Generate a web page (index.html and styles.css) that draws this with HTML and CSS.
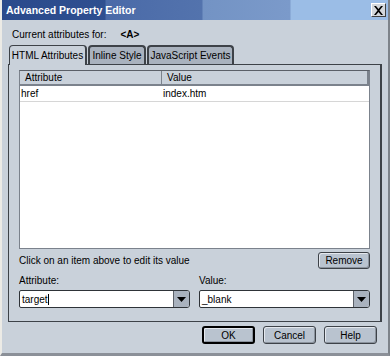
FILE: index.html
```html
<!DOCTYPE html>
<html>
<head>
<meta charset="utf-8">
<link rel="stylesheet" href="styles.css">
</head>
<body>
<div class="window">
  <div class="titlebar">
    <span class="title">Advanced Property Editor</span>
    <span class="close"><svg width="11" height="9" viewBox="0 0 11 9"><path d="M1 0h2l2.5 3L8 0h2L6.5 4.5 10 9H8L5.5 6 3 9H1l3.5-4.5z" fill="#000"/></svg></span>
  </div>
  <div class="content">
    <div class="current"><span>Current attributes for:</span><span class="tag">&lt;A&gt;</span></div>
    <div class="tabs">
      <div class="tab active t1">HTML Attributes</div>
      <div class="tab t2">Inline Style</div>
      <div class="tab t3">JavaScript Events</div>
    </div>
    <div class="panel">
      <div class="list">
        <div class="list-head">
          <div class="col c1">Attribute</div>
          <div class="col c2">Value</div>
        </div>
        <div class="list-row">
          <div class="cell c1">href</div>
          <div class="cell c2">index.htm</div>
        </div>
      </div>
      <div class="hint-row">
        <span>Click on an item above to edit its value</span>
        <button class="btn small">Remove</button>
      </div>
      <div class="fields">
        <div class="field">
          <label>Attribute:</label>
          <div class="combo"><span class="val">target<span class="caret"></span></span><span class="arrow"><svg width="9" height="5" viewBox="0 0 9 5"><path d="M0 0h9L4.5 5z" fill="#000"/></svg></span></div>
        </div>
        <div class="field">
          <label>Value:</label>
          <div class="combo"><span class="val">_blank</span><span class="arrow"><svg width="9" height="5" viewBox="0 0 9 5"><path d="M0 0h9L4.5 5z" fill="#000"/></svg></span></div>
        </div>
      </div>
    </div>
    <div class="buttons">
      <button class="btn default">OK</button>
      <button class="btn">Cancel</button>
      <button class="btn">Help</button>
    </div>
  </div>
</div>
</body>
</html>
```
FILE: styles.css
```css
* { box-sizing: border-box; }
html, body { margin: 0; padding: 0; }
body { width: 390px; height: 356px; overflow: hidden; font-family: "Liberation Sans", Arial, sans-serif; font-size: 10px; color: #000; background: #c9d1da; }
.window { width: 390px; height: 356px; display: flex; flex-direction: column; background: #c9d1da; border-left: 2px solid #ecebe6; border-right: 2px solid #7d838a; border-bottom: 3px solid #8b9098; }
.titlebar { height: 20px; flex: none; display: flex; align-items: center; justify-content: space-between; padding: 0 2px 0 4px; background: linear-gradient(90deg, #2a4a8c 0, #2f4f90 103px, #4a6aa8 104px, #5373ad 200px, #7393c4 201px, #7b9aca 288px, #9bbde6 289px, #9bbde6 100%); }
.title { color: #fff; font-weight: bold; font-size: 10.5px; }
.close { width: 15px; height: 14px; background: #d4d8dc; border: 1px solid; border-color: #fff #404040 #404040 #fff; display: flex; align-items: center; justify-content: center; }
.content { flex: 1; display: flex; flex-direction: column; padding: 0 6px 0 6px; }
.current { height: 24px; padding-top: 4px; display: flex; align-items: center; gap: 14px; padding-left: 4px; }
.tag { font-weight: bold; }
.tabs { display: flex; height: 20px; align-items: flex-end; gap: 1px; padding-left: 1px; }
.tab { height: 19px; padding: 0; white-space: nowrap; display: flex; align-items: center; justify-content: center; background: #a9b2be; border: 2px solid #3d4248; border-bottom: none; border-radius: 4px 4px 0 0; }
.t1 { width: 78px; }
.t2 { width: 58px; }
.t3 { width: 87px; }
.tab.active { background: #c9d1da; height: 20px; margin-bottom: -1px; position: relative; z-index: 1; border-width: 1px; border-right-width: 2px; }
.panel { height: 258px; border: 1px solid #3d4248; border-right-width: 2px; padding: 5px 10px 0 10px; display: flex; flex-direction: column; }
.list { height: 179px; background: #fff; border: 1px solid #7b828c; border-top-color: #5b6068; }
.list-head { display: flex; height: 15px; background: #c9d1da; border-bottom: 2px solid #7b828c; }
.col { padding-left: 5px; display: flex; align-items: center; border-right: 1px solid #7b828c; }
.c1 { width: 142px; }
.c2 { flex: 1; }
.col.c2 { border-right: 2px solid #7b828c; }
.list-row { display: flex; height: 16px; border-bottom: 1px solid #d6d6d6; }
.cell { display: flex; align-items: center; padding-left: 1px; }
.hint-row { display: flex; justify-content: space-between; align-items: center; margin-top: 3px; height: 17px; padding-left: 0; }
.btn { font-family: inherit; font-size: 10px; color: #000; background: #b9c3cf; border: 1px solid #3d4248; border-radius: 3px; box-shadow: inset 1px 1px 0 #e4e8ee, inset -1px -1px 0 #8b939d; padding: 0; }
.btn.small { width: 52px; height: 17px; }
.fields { display: flex; gap: 9px; margin-top: 2px; }
.field { flex: 1; display: flex; flex-direction: column; }
.field label { height: 19px; display: flex; align-items: center; }
.combo { height: 18px; display: flex; background: #fff; border: 1px solid #2e3338; border-radius: 2px 3px 3px 2px; }
.val { flex: 1; display: flex; align-items: center; padding-left: 2px; }
.caret { display: inline-block; width: 1px; height: 11px; background: #000; }
.arrow { width: 16px; display: flex; align-items: center; justify-content: center; background: #a9b2be; border-left: 1px solid #5b6068; border-radius: 0 2px 2px 0; }
.buttons { display: flex; justify-content: flex-end; gap: 8px; padding: 4px 5px 0 0; }
.buttons .btn { width: 53px; height: 18px; }
.btn.default { border-width: 2px; border-color: #000; }
```
